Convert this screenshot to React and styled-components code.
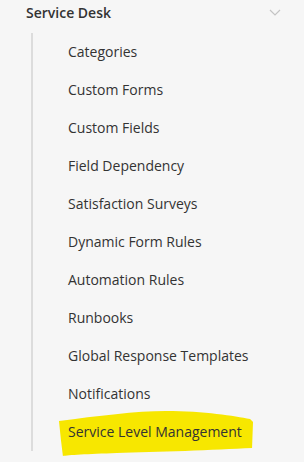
import React from 'react'
import styled, { createGlobalStyle } from 'styled-components'

const GlobalStyle = createGlobalStyle`
  html, body {
    margin: 0;
    padding: 0;
    background: #f6f6f6;
  }
  body {
    font-family: "Open Sans", "Liberation Sans", sans-serif;
    color: #333;
  }
`

const items = [
  'Categories',
  'Custom Forms',
  'Custom Fields',
  'Field Dependency',
  'Satisfaction Surveys',
  'Dynamic Form Rules',
  'Automation Rules',
  'Runbooks',
  'Global Response Templates',
  'Notifications',
  'Service Level Management',
]

export default function App() {
  return (
    <>
      <GlobalStyle />
      <Panel>
        <Header>
          <Title>Service Desk</Title>
          <Chevron width="12" height="7" viewBox="0 0 12 7">
            <path d="M1 1l5 5 5-5" fill="none" stroke="#c4c4c4" strokeWidth="1.2" />
          </Chevron>
        </Header>
        <List>
          {items.map((label) => (
            <Item key={label}>
              {label === 'Service Level Management' && (
                <Marker viewBox="0 0 200 46" preserveAspectRatio="none">
                  <path
                    d="M1 11 C40 6 80 1 110 1 C150 1 180 6 196 9 L199 12 L198 38 C160 40 100 42 60 43 C30 44 10 45 5 46 L3 30 Z"
                    fill="#f7e700"
                  />
                </Marker>
              )}
              <Label>{label}</Label>
            </Item>
          ))}
        </List>
      </Panel>
    </>
  )
}

const Panel = styled.div`
  width: 304px;
  height: 462px;
`

const Header = styled.div`
  display: flex;
  align-items: center;
  justify-content: space-between;
  height: 25px;
  padding: 0 23px 8px 26px;
`

const Title = styled.span`
  font-size: 14px;
  font-weight: 600;
  color: #333;
`

const Chevron = styled.svg`
  display: block;
`

const List = styled.ul`
  list-style: none;
  margin: 0 0 0 31px;
  padding: 0;
  border-left: 2px solid #dcdcdc;
  width: 240px;
`

const Item = styled.li`
  position: relative;
  height: 38px;
  display: flex;
  align-items: center;
  padding-left: 35px;
  padding-bottom: 1px;
  box-sizing: border-box;
`

const Label = styled.span`
  position: relative;
  font-size: 14px;
  color: #333;
  white-space: nowrap;
`

const Marker = styled.svg`
  position: absolute;
  left: 25px;
  top: -3px;
  width: 196px;
  height: 46px;
`
